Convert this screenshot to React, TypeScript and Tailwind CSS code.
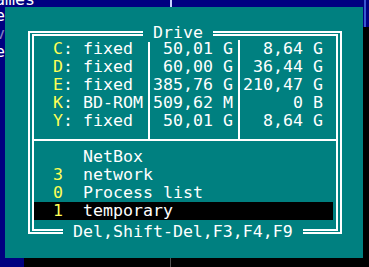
import React from "react";

const Y = "text-[#ffff55]";

const drives = [
  { k: "C", name: "fixed", total: "50,01 G", free: "8,64 G" },
  { k: "D", name: "fixed", total: "60,00 G", free: "36,44 G" },
  { k: "E", name: "fixed", total: "385,76 G", free: "210,47 G" },
  { k: "K", name: "BD-ROM", total: "509,62 M", free: "0 B" },
  { k: "Y", name: "fixed", total: "50,01 G", free: "8,64 G" },
];

const others = [
  { k: "", label: "NetBox", sel: false },
  { k: "3", label: "network", sel: false },
  { k: "0", label: "Process list", sel: false },
  { k: "1", label: "temporary", sel: true },
];

function VSep() {
  return (
    <div className="flex w-[10px]">
      <div className="ml-[5px] w-[2px] bg-white" />
    </div>
  );
}

function DriveRow({ d }: { d: (typeof drives)[number] }) {
  return (
    <div className="flex h-[18px] whitespace-pre">
      <div className="w-[19px]" />
      <div className="w-[90px]">
        <span className={Y}>{d.k}</span>: {d.name}
      </div>
      <VSep />
      <div className="w-[80px] text-right">{d.total}</div>
      <VSep />
      <div className="w-[80px] text-right">{d.free}</div>
    </div>
  );
}

export default function App() {
  return (
    <div className="relative h-[267px] w-[369px] overflow-hidden bg-[#000080] font-['DejaVu_Sans_Mono',monospace] text-[16.6px] leading-[18px] text-white">
      {/* panels behind the dialog */}
      <div className="flex h-[7px] overflow-hidden">
        <div className="w-[170px] overflow-hidden">
          <div className="-ml-[5px] -mt-[9px] whitespace-pre">ames</div>
        </div>
        <div className="w-[2px] bg-[#c8d4ff]" />
        <div className="w-[192px]" />
        <div className="w-[2px] bg-[#3a58d0]" />
      </div>
      <div className="flex h-[260px]">
        <div className="flex w-[5px] flex-col overflow-hidden">
          <div className="-ml-[5px] h-[18px]">e</div>
          <div className="-ml-[5px] h-[18px] text-[#7c80c0]">v</div>
          <div className="-ml-[5px] h-[18px]">e</div>
        </div>
        <div className="w-[359px]" />
        <div className="w-[2px] bg-[#3a58d0]" />
      </div>

      {/* shadow */}
      <div className="absolute left-[363px] top-[27px] h-[240px] w-[6px] bg-black" />
      <div className="absolute left-[24px] top-[258px] flex h-[9px] w-[345px] bg-black">
        <div className="w-[146px]" />
        <div className="w-[1px] bg-[#505050]" />
      </div>

      {/* dialog */}
      <div className="absolute left-[5px] top-[7px] h-[251px] w-[358px] bg-[#008080] pl-[23px] pt-[24px]">
        <div className="relative h-[203px] w-[314px] border-2 border-white px-[2px] py-[1px]">
          <div className="h-full w-full border-2 border-white pt-[4px]">
            {drives.map((d) => (
              <DriveRow key={d.k} d={d} />
            ))}
            <div className="flex h-[18px] flex-col">
              <div className="flex h-[9px]">
                <div className="w-[109px]" />
                <VSep />
                <div className="w-[80px]" />
                <VSep />
              </div>
              <div className="h-[2px] bg-white" />
            </div>
            {others.map((o) => (
              <div
                key={o.label}
                className={`flex h-[18px] whitespace-pre ${o.sel ? "mr-[3px] bg-black" : ""}`}
              >
                <div className="w-[19px]" />
                <div className={`w-[30px] ${Y}`}>{o.k}</div>
                <div>{o.label}</div>
              </div>
            ))}
          </div>
          <div className="absolute left-[113px] top-[-9px] whitespace-pre bg-[#008080]">{" Drive "}</div>
          <div className="absolute left-[33px] top-[190px] whitespace-pre bg-[#008080]">
            {" Del,Shift-Del,F3,F4,F9 "}
          </div>
        </div>
      </div>
    </div>
  );
}
